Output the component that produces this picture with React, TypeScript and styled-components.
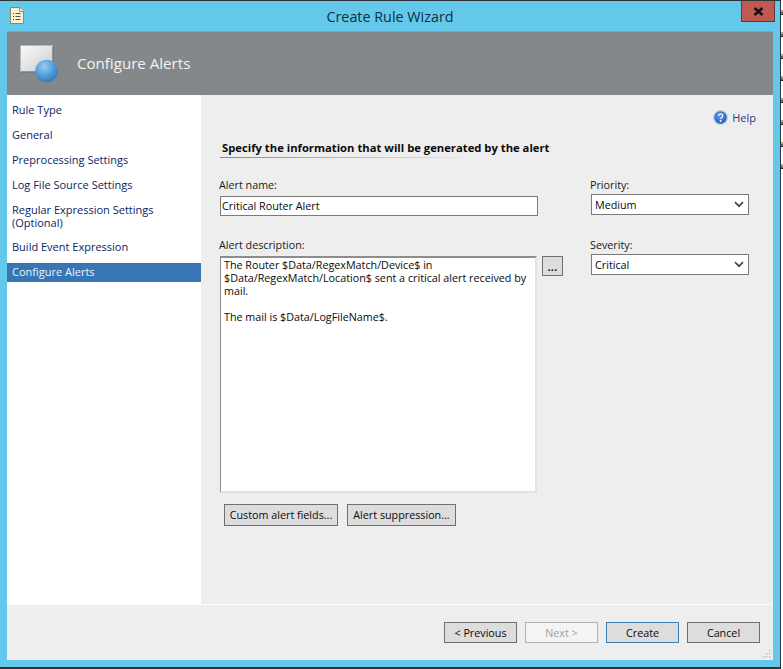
import React from "react";
import styled, { createGlobalStyle } from "styled-components";

const Global = createGlobalStyle`
  html, body { margin: 0; padding: 0; background: #fff; overflow: hidden; }
  body { font-family: "Open Sans", "Noto Sans", sans-serif; font-size: 10.75px; color: #0a0a0a; }
`;
const Page = styled.div`display: flex; width: 783px; height: 669px; overflow: hidden;`;
const Frame = styled.div`
  width: 781px; height: 669px; box-sizing: border-box; flex: none;
  border: 1px solid #2f3336; border-width: 1px 1px 2px 0;
  background: #63c8ea; display: flex; flex-direction: column;
  padding: 0 7px 7px 7px; position: relative;
`;
const Sliver = styled.div`
  flex: 1; display: flex; flex-direction: column; gap: 17px; padding-top: 10px; background: #fff;
`;
const SliverMark = styled.i`
  display: block; width: 2px; height: 5px;
  background: linear-gradient(#d9a23a 0 2px, #3a6ea8 2px 4px, #222 4px);
`;
const TitleBar = styled.div`
  height: 30px; flex: none; display: flex; align-items: center; justify-content: center; position: relative;
`;
const AppIcon = styled.svg`position: absolute; left: 3px; top: 6px;`;
const Title = styled.div`font-size: 14.35px; color: #10303d;`;
const Close = styled.div`
  position: absolute; right: -2px; top: 0; width: 34px; height: 21px; box-sizing: border-box;
  background: #c05a50; border: 1px solid #5c3f3c; border-top: none;
  display: flex; align-items: center; justify-content: center;
`;
const Banner = styled.div`
  height: 64px; flex: none; background: #85888b; display: flex; align-items: center; gap: 19px;
  padding-left: 13px; border-top: 1px solid #7fa6b6; box-sizing: border-box;
`;
const BannerTitle = styled.div`font-size: 15.1px; color: #f2f4f5; font-weight: 400; padding-bottom: 1px;`;
const Middle = styled.div`flex: 1; display: flex; min-height: 0;`;
const Nav = styled.nav`
  width: 194px; flex: none; background: #fff; display: flex; flex-direction: column; gap: 6px; padding-top: 5px; box-sizing: border-box;
  font-size: 11px;
`;
const NavItem = styled.div<{ $tall?: boolean }>`
  padding: 3px 5px ${p => (p.$tall ? "2px" : "3px")};
  line-height: 13px;
  color: #0c2460;
`;
const ActiveNavItem = styled(NavItem)`
  margin-top: 1px; padding: 2px 5px 4px; color: #eef3f9; background: #3776b4;
`;
const Main = styled.main`
  flex: 1; background: #eeeeee; display: flex; flex-direction: column; padding: 14px 17px 0 18px; min-width: 0;
`;
const HelpRow = styled.div`display: flex; justify-content: flex-end; align-items: center; gap: 4px; height: 17px; color: #1f3a8c; font-size: 11px;`;
const Heading = styled.div`
  margin-top: 14px; font-weight: 700; font-size: 11.25px; color: #0a0a0a; padding: 0 0 2px 2px; line-height: 16px;
  margin-left: 1px; width: 340px; white-space: nowrap;
  background: linear-gradient(90deg, #8a8a8a, #e4e4e4) left bottom / 240px 1px no-repeat;
`;
const FormGrid = styled.div`
  display: grid; grid-template-columns: 345px 158px; column-gap: 27px; margin-top: 20px;
`;
const LeftCol = styled.div`display: flex; flex-direction: column;`;
const RightCol = styled.div`display: flex; flex-direction: column;`;
const Label = styled.label`display: block; line-height: 14px; color: #1a1a1a;`;
const NameInput = styled.div`
  margin: 4px 0 0 1px; width: 318px; height: 20px; box-sizing: border-box; background: #fff; border: 1px solid #7a7a7a;
  padding: 0 1px; line-height: 18px;
`;
const DescLabel = styled(Label)`margin-top: 22px;`;
const DescRow = styled.div`display: flex; gap: 5px; margin: 4px 0 0 1px; align-items: flex-start;`;
const Description = styled.div`
  width: 317px; height: 237px; box-sizing: border-box; background: #fff;
  border: 2px solid; border-color: #8d8d8d #e2e2e2 #e2e2e2 #8d8d8d; border-left-width: 1px;
  padding: 1px 3px; line-height: 13px; white-space: pre-line;
`;
const Button = styled.div<{ $w: number; $h?: number; $disabled?: boolean; $primary?: boolean }>`
  width: ${p => p.$w}px; height: ${p => p.$h ?? 21}px; box-sizing: border-box; flex: none;
  display: flex; align-items: center; justify-content: center;
  background: ${p => (p.$disabled ? "#f4f4f4" : "#dddddd")};
  border: 1px solid ${p => (p.$primary ? "#3c7fb1" : p.$disabled ? "#adb2b5" : "#707070")};
  color: ${p => (p.$disabled ? "#a0a0a0" : "#0a0a0a")};
`;
const Dots = styled(Button)`align-items: flex-end; padding-bottom: 4px; font-weight: 700; line-height: 8px; letter-spacing: 0.3px;`;
const Select = styled.div`
  margin-top: 2px; height: 21px; box-sizing: border-box; background: #fff; border: 1px solid #7a7a7a;
  display: flex; align-items: center; justify-content: space-between; padding: 0 4px 0 3px;
`;
const PriorityLabel = styled(Label)`margin-left: -1px;`;
const SeverityLabel = styled(Label)`margin: 23px 0 0 -1px;`;
const ExtraButtons = styled.div`display: flex; gap: 9px; margin: 11px 0 0 5px;`;
const Footer = styled.footer`
  height: 56px; flex: none; box-sizing: border-box; background: #eeeeee; border-top: 1px solid #fbfbfb;
  display: flex; justify-content: flex-end; gap: 8px; padding: 17px 13px 0 0; position: relative;
`;
const Grip = styled.svg`position: absolute; right: 2px; bottom: 2px;`;

const Chevron = () => (
  <svg width="10" height="7" viewBox="0 0 10 7"><path d="M1 1.2 5 5.2 9 1.2" fill="none" stroke="#4a4a4a" strokeWidth="1.7" /></svg>
);

const navItems = ["Rule Type", "General", "Preprocessing Settings", "Log File Source Settings"];

export default function App() {
  return (
    <Page>
      <Global />
      <Frame>
        <TitleBar>
          <AppIcon width="14" height="17" viewBox="0 0 14 17">
            <path d="M.5.5h9l4 4v12H.5z" fill="#fbf0cf" stroke="#8d8469" />
            <path d="M9.5.5v4h4" fill="#fff" stroke="#8d8469" />
            <path d="M3 6.5h1M3 9.5h1M3 12.5h1" stroke="#3a3a3a" />
            <path d="M5.5 6.5h5M5.5 9.5h5M5.5 12.5h5" stroke="#555" />
          </AppIcon>
          <Title>Create Rule Wizard</Title>
          <Close>
            <svg width="11" height="9" viewBox="0 0 11 9"><path d="M1.5 1 9.5 8M9.5 1 1.5 8" stroke="#111" strokeWidth="2.4" /></svg>
          </Close>
        </TitleBar>
        <Banner>
          <svg width="38" height="38" viewBox="0 0 38 38">
            <defs>
              <linearGradient id="pane" x1="0" y1="0" x2="1" y2="1"><stop offset="0" stopColor="#fbfbfb" /><stop offset="1" stopColor="#c9cbcd" /></linearGradient>
              <radialGradient id="ball" cx="0.4" cy="0.3" r="0.8"><stop offset="0" stopColor="#9ccdf0" /><stop offset="0.55" stopColor="#4f9ad6" /><stop offset="1" stopColor="#2a6eaf" /></radialGradient>
            </defs>
            <rect x="0.5" y="0.5" width="32" height="26" fill="url(#pane)" stroke="#b5b7b9" />
            <path d="M1 27h32V2" fill="none" stroke="#6d6f71" />
            <circle cx="26.5" cy="26" r="11.3" fill="url(#ball)" />
          </svg>
          <BannerTitle>Configure Alerts</BannerTitle>
        </Banner>
        <Middle>
          <Nav>
            {navItems.map(t => <NavItem key={t}>{t}</NavItem>)}
            <NavItem $tall>Regular Expression Settings<br />(Optional)</NavItem>
            <NavItem>Build Event Expression</NavItem>
            <ActiveNavItem>Configure Alerts</ActiveNavItem>
          </Nav>
          <Main>
            <HelpRow>
              <svg width="15" height="15" viewBox="0 0 15 15">
                <defs><radialGradient id="hb" cx="0.45" cy="0.4" r="0.7"><stop offset="0" stopColor="#5b9be6" /><stop offset="1" stopColor="#1a4fb0" /></radialGradient></defs>
                <circle cx="7.5" cy="7.5" r="6.8" fill="url(#hb)" stroke="#b9cde8" strokeWidth="1.2" />
                <path d="M5.4 5.8c.2-1.4 1.2-1.9 2.2-1.9 1.3 0 2.2.8 2.2 1.9 0 1.6-2.1 1.6-2.1 3.2" fill="none" stroke="#fff" strokeWidth="1.3" />
                <circle cx="7.6" cy="11" r="0.9" fill="#fff" />
              </svg>
              Help
            </HelpRow>
            <Heading>Specify the information that will be generated by the alert</Heading>
            <FormGrid>
              <LeftCol>
                <Label>Alert name:</Label>
                <NameInput>Critical Router Alert</NameInput>
                <DescLabel>Alert description:</DescLabel>
                <DescRow>
                  <Description>{"The Router $Data/RegexMatch/Device$ in\n$Data/RegexMatch/Location$ sent a critical alert received by\nmail.\n\nThe mail is $Data/LogFileName$."}</Description>
                  <Dots $w={21} $h={20}>...</Dots>
                </DescRow>
                <ExtraButtons>
                  <Button $w={114} $h={22}>Custom alert fields...</Button>
                  <Button $w={109} $h={22}>Alert suppression...</Button>
                </ExtraButtons>
              </LeftCol>
              <RightCol>
                <PriorityLabel>Priority:</PriorityLabel>
                <Select>Medium<Chevron /></Select>
                <SeverityLabel>Severity:</SeverityLabel>
                <Select>Critical<Chevron /></Select>
              </RightCol>
            </FormGrid>
          </Main>
        </Middle>
        <Footer>
          <Button $w={73}>&lt; Previous</Button>
          <Button $w={73} $disabled>Next &gt;</Button>
          <Button $w={73} $primary>Create</Button>
          <Button $w={73}>Cancel</Button>
          <Grip width="9" height="9" viewBox="0 0 9 9" fill="#c4c4c4">
            <rect x="7" y="1" width="1.5" height="1.5" /><rect x="4" y="4" width="1.5" height="1.5" /><rect x="7" y="4" width="1.5" height="1.5" />
            <rect x="1" y="7" width="1.5" height="1.5" /><rect x="4" y="7" width="1.5" height="1.5" /><rect x="7" y="7" width="1.5" height="1.5" />
          </Grip>
        </Footer>
      </Frame>
      <Sliver>
        {Array.from({ length: 8 }).map((_, i) => <SliverMark key={i} />)}
      </Sliver>
    </Page>
  );
}
